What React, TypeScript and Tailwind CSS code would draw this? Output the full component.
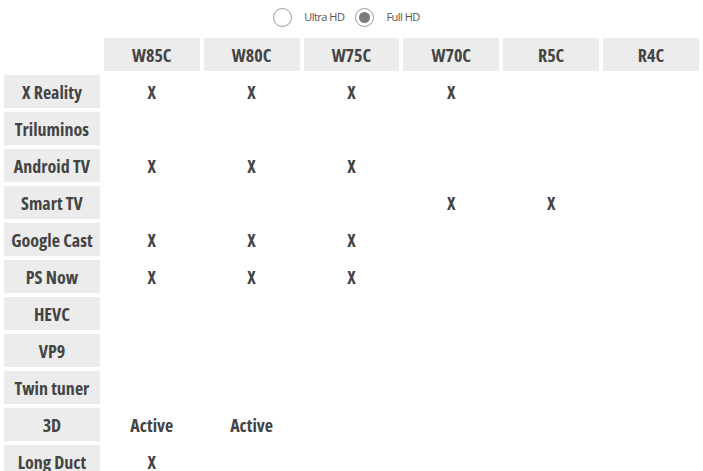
import React, { useState } from 'react';

const models = ['W85C', 'W80C', 'W75C', 'W70C', 'R5C', 'R4C'];

const rows: { name: string; cells: string[] }[] = [
    { name: 'X Reality', cells: ['X', 'X', 'X', 'X', '', ''] },
    { name: 'Triluminos', cells: ['', '', '', '', '', ''] },
    { name: 'Android TV', cells: ['X', 'X', 'X', '', '', ''] },
    { name: 'Smart TV', cells: ['', '', '', 'X', 'X', ''] },
    { name: 'Google Cast', cells: ['X', 'X', 'X', '', '', ''] },
    { name: 'PS Now', cells: ['X', 'X', 'X', '', '', ''] },
    { name: 'HEVC', cells: ['', '', '', '', '', ''] },
    { name: 'VP9', cells: ['', '', '', '', '', ''] },
    { name: 'Twin tuner', cells: ['', '', '', '', '', ''] },
    { name: '3D', cells: ['Active', 'Active', '', '', '', ''] },
    { name: 'Long Duct', cells: ['X', '', '', '', '', ''] },
];

const Radio = ({ checked, label, onClick }: any) => (
    <label className="flex items-center gap-[12px] cursor-pointer" onClick={onClick}>
        <span className="w-[19px] h-[19px] rounded-full border border-[#9a9a9a] bg-white flex items-center justify-center">
            {checked && <span className="w-[11px] h-[11px] rounded-full bg-[#7a7a7a]" />}
        </span>
        <span className="text-[11px] text-[#555] font-stretch-normal tracking-[-0.5px]">{label}</span>
    </label>
);

export default function App() {
    const [mode, setMode] = useState('full');

    return (
        <div className="w-[703px] h-[471px] overflow-hidden bg-white text-[#444] font-stretch-condensed" style={{ fontFamily: '"Open Sans", sans-serif' }}>
            <div className="h-[34px] flex items-center justify-center gap-[11px] pr-[10px]">
                <Radio label="Ultra HD" checked={mode === 'uhd'} onClick={() => setMode('uhd')} />
                <Radio label="Full HD" checked={mode === 'full'} onClick={() => setMode('full')} />
            </div>
            <table className="w-[703px] border-separate border-spacing-[4px] table-fixed">
                <thead>
                    <tr>
                        <th className="h-[33px] p-0" />
                        {models.map(m => (
                            <th key={m} className="h-[33px] p-0 pt-[1px] bg-[#ececec] text-[18px] font-bold text-center">{m}</th>
                        ))}
                    </tr>
                </thead>
                <tbody>
                    {rows.map(r => (
                        <tr key={r.name}>
                            <td className="h-[33px] p-0 pt-[1px] bg-[#ececec] text-[18px] font-bold text-center whitespace-nowrap">{r.name}</td>
                            {r.cells.map((c, i) => (
                                <td key={i} className="h-[33px] p-0 pt-[1px] text-[18px] font-bold text-center">{c}</td>
                            ))}
                        </tr>
                    ))}
                </tbody>
            </table>
        </div>
    );
}
